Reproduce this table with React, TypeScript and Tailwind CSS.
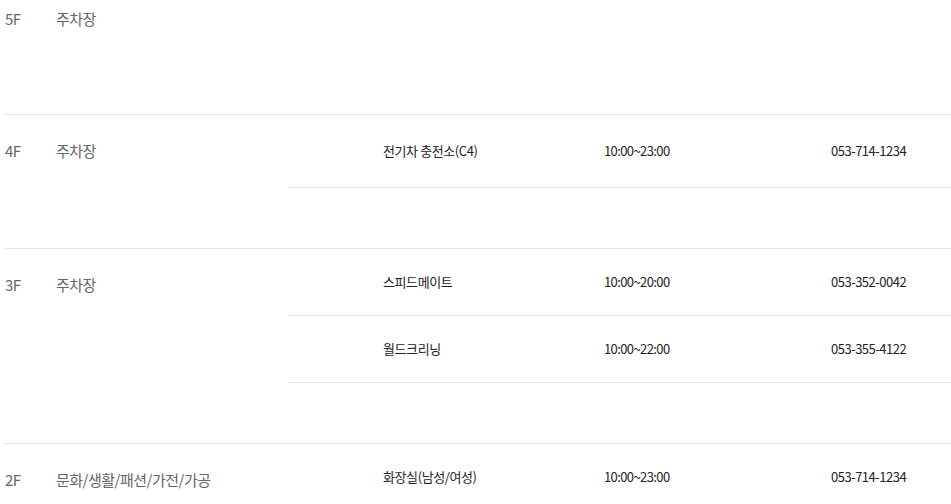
import React from "react";

type Row = { name: string; hours: string; phone: string; h: string };
type Floor = { floor: string; cat: string; labelH: string; extra: string; rows: Row[] };

const floors: Floor[] = [
  { floor: "5F", cat: "주차장", labelH: "h-[70px]", extra: "-mt-[16px] border-t-0", rows: [] },
  {
    floor: "4F",
    cat: "주차장",
    labelH: "h-[72px]",
    extra: "",
    rows: [{ name: "전기차 충전소(C4)", hours: "10:00~23:00", phone: "053-714-1234", h: "h-[73px]" }],
  },
  {
    floor: "3F",
    cat: "주차장",
    labelH: "h-[72px]",
    extra: "",
    rows: [
      { name: "스피드메이트", hours: "10:00~20:00", phone: "053-352-0042", h: "h-[67px]" },
      { name: "월드크리닝", hours: "10:00~22:00", phone: "053-355-4122", h: "h-[67px]" },
    ],
  },
  {
    floor: "2F",
    cat: "문화/생활/패션/가전/가공",
    labelH: "h-[72px]",
    extra: "",
    rows: [{ name: "화장실(남성/여성)", hours: "10:00~23:00", phone: "053-714-1234", h: "h-[67px]" }],
  },
];

export default function App() {
  return (
    <div
      className="w-[951px] h-[504px] overflow-hidden bg-white"
      style={{ fontFamily: '"Noto Sans CJK KR", "Noto Sans", sans-serif' }}
    >
      <div className="pl-[5px]">
        {floors.map((f) => (
          <div key={f.floor} className={`flex border-t border-[#e3e3e3] pb-[60px] ${f.extra}`}>
            <div className={`w-[283px] shrink-0 flex items-center ${f.labelH} text-[15px] tracking-[-0.5px] text-[#666]`}>
              <span className="w-[51px]">{f.floor}</span>
              <span>{f.cat}</span>
            </div>
            <div className="flex-1">
              {f.rows.map((r) => (
                <div
                  key={r.name}
                  className={`flex items-center ${r.h} border-b border-[#e3e3e3] pl-[95px] text-[13px] text-[#222]`}
                >
                  <span className="w-[221px] tracking-[-0.4px]">{r.name}</span>
                  <span className="w-[227px] tracking-[-0.6px]">{r.hours}</span>
                  <span className="tracking-[-0.5px]">{r.phone}</span>
                </div>
              ))}
            </div>
          </div>
        ))}
      </div>
    </div>
  );
}
